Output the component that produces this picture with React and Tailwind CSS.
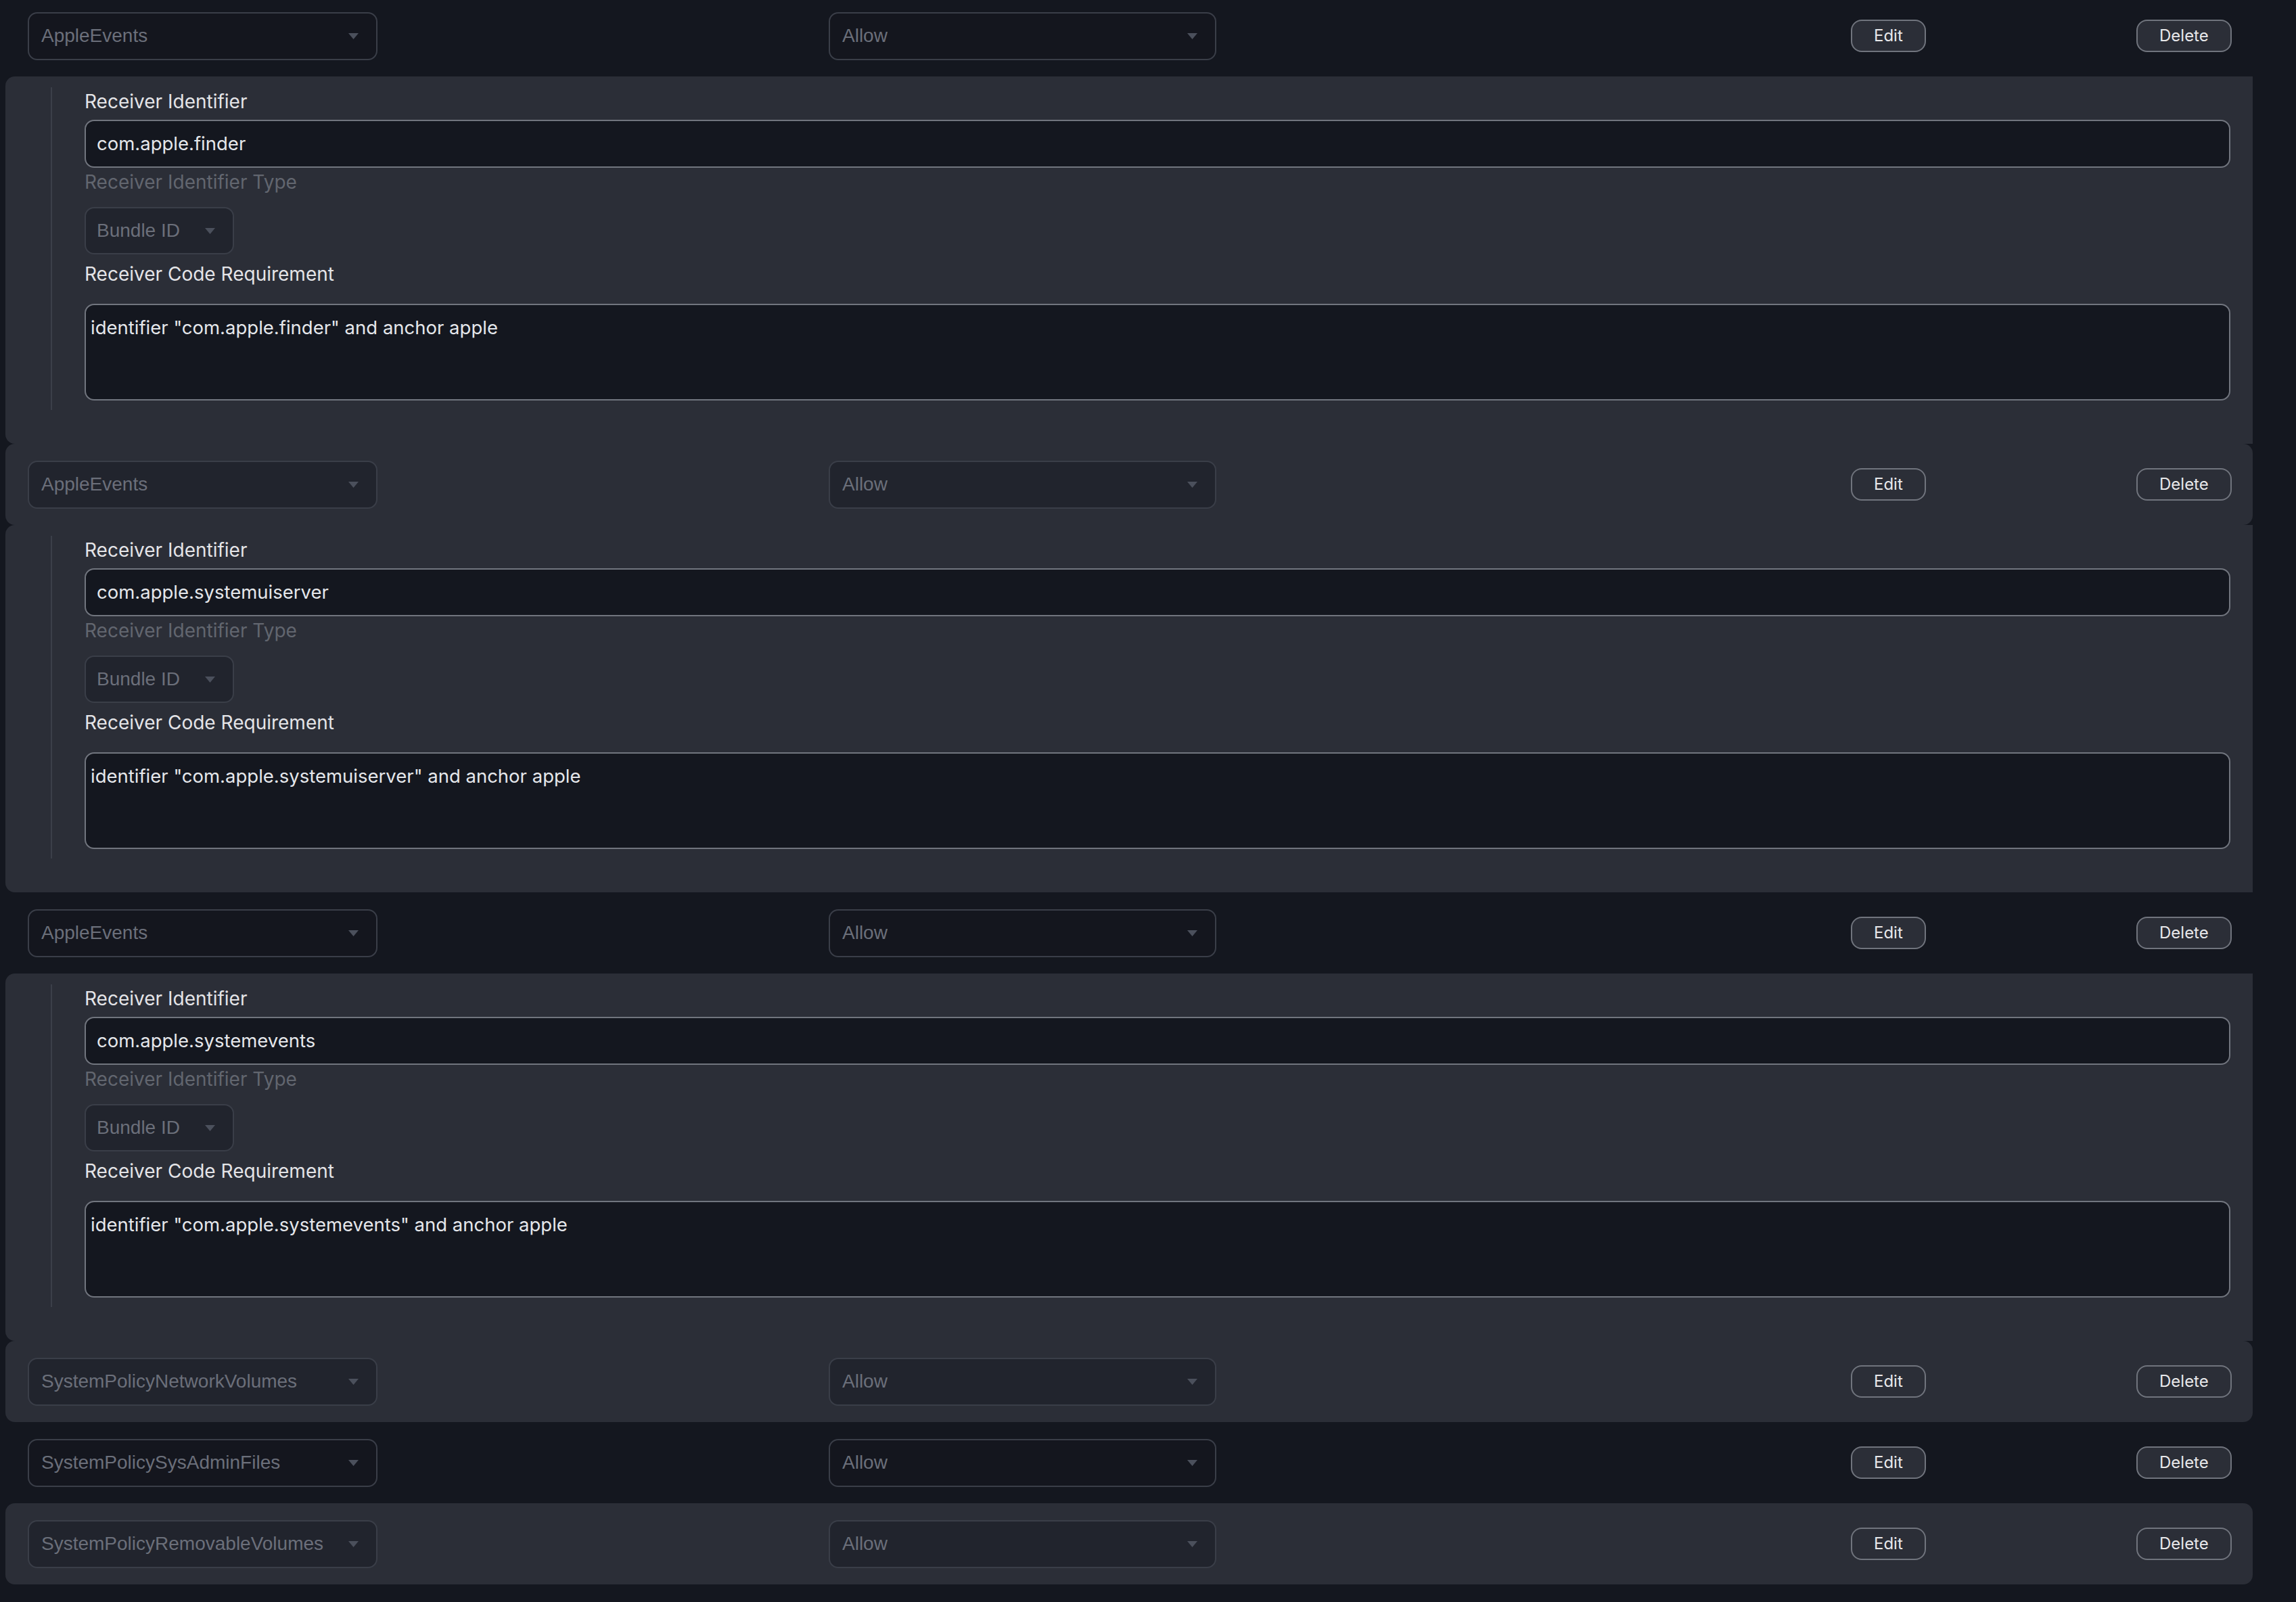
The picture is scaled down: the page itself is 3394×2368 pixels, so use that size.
import React from 'react';

// Privacy rules list: header row per rule, AppleEvents rules get an extra receiver panel
const rules = [
  { service: 'AppleEvents', receiver: 'com.apple.finder' },
  { service: 'AppleEvents', receiver: 'com.apple.systemuiserver' },
  { service: 'AppleEvents', receiver: 'com.apple.systemevents' },
  { service: 'SystemPolicyNetworkVolumes' },
  { service: 'SystemPolicySysAdminFiles' },
  { service: 'SystemPolicyRemovableVolumes' },
];

function Caret() {
  return (
    <svg width="15" height="9" viewBox="0 0 15 9" aria-hidden="true" className="shrink-0">
      <path d="M0 0 H15 L7.5 9 Z" fill="#4b505c" />
    </svg>
  );
}

function FakeSelect({ value, width }) {
  return (
    <div
      className={`${width} h-[71px] flex items-center justify-between pl-[18px] pr-[26px] rounded-[14px] border-2 border-[#3a3e48] bg-[#14171f]/40 font-['Liberation_Sans',Arial,sans-serif] text-[28px] text-[#6b6f7a]`}
    >
      <span className="truncate">{value}</span>
      <Caret />
    </div>
  );
}

function OutlineButton({ children }) {
  return (
    <button className="h-[48px] px-[32px] rounded-[16px] border-2 border-[#70747d] bg-[#2b2e37] text-[24px] leading-none text-[#e8e8ea]">
      {children}
    </button>
  );
}

function RuleHeader({ service, striped }) {
  return (
    <div
      className={`grid grid-cols-[1184px_1511px_422px_1fr] items-center h-[120px] rounded-[14px] ${
        striped ? 'bg-[#2b2e37]' : ''
      }`}
    >
      <div className="px-[33px]">
        <FakeSelect value={service} width="w-[517px]" />
      </div>
      <div className="px-[33px]">
        <FakeSelect value="Allow" width="w-[573px]" />
      </div>
      <div className="px-[33px]">
        <OutlineButton>Edit</OutlineButton>
      </div>
      <div className="px-[33px] flex justify-end">
        <OutlineButton>Delete</OutlineButton>
      </div>
    </div>
  );
}

function ReceiverPanel({ receiver }) {
  return (
    <div className="rounded-l-[14px] bg-[#2b2e37] pl-[67px] pr-[33px] pt-[16px] pb-[50px]">
      <div className="border-l-2 border-[#3b3f49] pl-[48px] pb-[14px] flex flex-col">
        <label className="text-[28px] leading-[42px] text-[#e4e4e7]">Receiver Identifier</label>
        <div className="mt-[6px] h-[71px] flex items-center px-[16px] rounded-[14px] border-2 border-[#71757e] bg-[#14171f] text-[27.5px] text-[#e5e7eb]">
          {receiver}
        </div>
        <label className="text-[28px] leading-[42px] text-[#62666f]">Receiver Identifier Type</label>
        <div className="mt-[16px] w-[221px] h-[70px] flex items-center justify-between pl-[16px] pr-[26px] rounded-[14px] border-2 border-[#3a3e48] bg-[#14171f]/40 font-['Liberation_Sans',Arial,sans-serif] text-[28px] text-[#6b6f7a]">
          <span>Bundle ID</span>
          <Caret />
        </div>
        <label className="mt-[8px] text-[28px] leading-[42px] text-[#e4e4e7]">Receiver Code Requirement</label>
        <div className="mt-[23px] h-[143px] rounded-[14px] border-2 border-[#71757e] bg-[#14171f] pl-[7px] pt-[12px] text-[27.5px] leading-[42px] text-[#e5e7eb]">
          identifier "{receiver}" and anchor apple
        </div>
      </div>
    </div>
  );
}

export default function App() {
  return (
    <div className="min-h-screen bg-[#14171f] pl-[8px] pr-[64px] overflow-hidden font-['Inter','Noto_Sans',sans-serif]">
      <div className="-mt-[7px] flex flex-col">
        {rules.map((rule, i) => (
          <React.Fragment key={i}>
            <RuleHeader service={rule.service} striped={i % 2 === 1} />
            {rule.receiver && <ReceiverPanel receiver={rule.receiver} />}
          </React.Fragment>
        ))}
      </div>
    </div>
  );
}
